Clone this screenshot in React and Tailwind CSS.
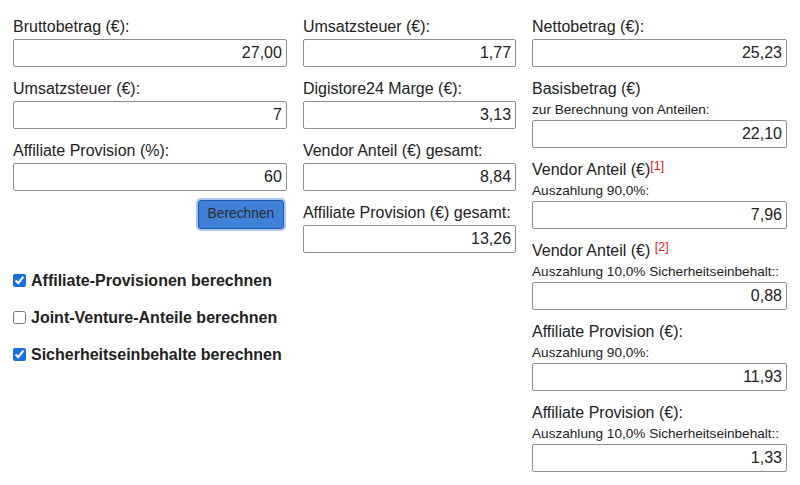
import React from 'react';

const Field = ({ label, sup, sub, value }) => (
  <div className="mb-[11px]">
    <label className="block h-[22px] leading-[22px] text-[16px]">
      {label}
      {sup && <span className="relative top-[-5px] text-[12.5px] leading-none text-[#e8141a]">{sup}</span>}
    </label>
    {sub && <div className="h-[19px] leading-[19px] text-[13.6px]">{sub}</div>}
    <div className="mt-[1px] h-[28px] border border-[#8e8e8e] rounded-[2px] bg-white flex items-center justify-end pr-[4px] text-[16px]">
      {value}
    </div>
  </div>
);

const Check = ({ label, checked }) => (
  <label className="flex items-center h-[37px] font-bold text-[16px]">
    <input
      type="checkbox"
      defaultChecked={checked}
      className="w-[13px] h-[13px] mr-[5px] accent-[#1a6fe0]"
    />
    {label}
  </label>
);

export default function App() {
  return (
    <div
      className="w-[800px] h-[485px] bg-white text-[#222] flex gap-[16px] px-[13px] pt-[16px]"
      style={{ fontFamily: '"Liberation Sans", Arial, sans-serif' }}
    >
      {/* linke Spalte */}
      <div className="w-[275px] flex flex-col">
        <Field label="Bruttobetrag (€):" value="27,00" />
        <Field label="Umsatzsteuer (€):" value="7" />
        <Field label="Affiliate Provision (%):" value="60" />
        <div className="flex justify-end pr-[3px] -mt-[2px]">
          <button className="w-[86px] h-[29px] bg-[#3f80d8] border border-[#2458a8] rounded-[3px] ring-2 ring-[#a9c9f4] text-[13.8px] text-[#2b2b2b]">
            Berechnen
          </button>
        </div>
        <div className="mt-[33px] flex flex-col">
          <Check label="Affiliate-Provisionen berechnen" checked />
          <Check label="Joint-Venture-Anteile berechnen" />
          <Check label="Sicherheitseinbehalte berechnen" checked />
        </div>
      </div>

      {/* mittlere Spalte */}
      <div className="w-[214px] flex flex-col">
        <Field label="Umsatzsteuer (€):" value="1,77" />
        <Field label="Digistore24 Marge (€):" value="3,13" />
        <Field label="Vendor Anteil (€) gesamt:" value="8,84" />
        <Field label="Affiliate Provision (€) gesamt:" value="13,26" />
      </div>

      {/* rechte Spalte */}
      <div className="w-[256px] flex flex-col">
        <Field label="Nettobetrag (€):" value="25,23" />
        <Field label="Basisbetrag (€)" sub="zur Berechnung von Anteilen:" value="22,10" />
        <Field label="Vendor Anteil (€)" sup="[1]" sub="Auszahlung 90,0%:" value="7,96" />
        <Field label="Vendor Anteil (€) " sup="[2]" sub="Auszahlung 10,0% Sicherheitseinbehalt::" value="0,88" />
        <Field label="Affiliate Provision (€):" sub="Auszahlung 90,0%:" value="11,93" />
        <Field label="Affiliate Provision (€):" sub="Auszahlung 10,0% Sicherheitseinbehalt::" value="1,33" />
      </div>
    </div>
  );
}
